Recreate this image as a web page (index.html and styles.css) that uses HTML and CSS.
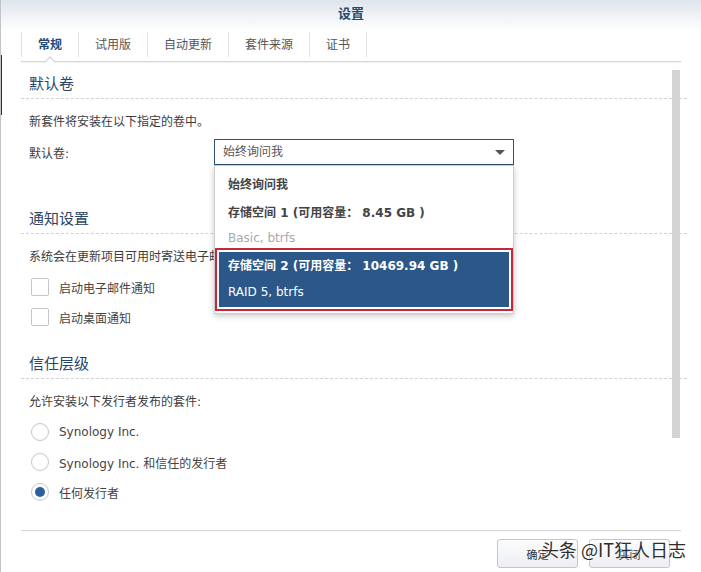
FILE: index.html
```html
<!DOCTYPE html>
<html lang="zh-CN">

<head>
    <meta charset="UTF-8">
    <title>设置</title>
    <link rel="stylesheet" href="styles.css">
</head>

<body>
    <div class="window">
        <div class="edge-mark"></div>
        <div class="titlebar">设置</div>

        <div class="tabs">
            <div class="tab active">常规</div>
            <div class="tab">试用版</div>
            <div class="tab">自动更新</div>
            <div class="tab">套件来源</div>
            <div class="tab">证书</div>
        </div>

        <div class="content">
            <!-- default volume -->
            <div class="section">
                <div class="section-title">默认卷</div>
                <p class="desc">新套件将安装在以下指定的卷中。</p>
                <div class="field-row">
                    <span class="field-label">默认卷:</span>
                    <div class="select">
                        始终询问我
                        <div class="dropdown">
                            <div class="opt bold">始终询问我</div>
                            <div class="opt bold gap">存储空间 1 (可用容量： 8.45 GB )</div>
                            <div class="opt sub">Basic, btrfs</div>
                            <div class="picked">
                                <div class="picked-inner">
                                    <div class="opt bold">存储空间 2 (可用容量： 10469.94 GB )</div>
                                    <div class="opt">RAID 5, btrfs</div>
                                </div>
                            </div>
                        </div>
                    </div>
                </div>
            </div>

            <!-- notification -->
            <div class="section notify">
                <div class="section-title">通知设置</div>
                <p class="desc">系统会在更新项目可用时寄送电子邮件通知。</p>
                <div class="check-row"><span class="checkbox"></span>启动电子邮件通知</div>
                <div class="check-row"><span class="checkbox"></span>启动桌面通知</div>
            </div>

            <!-- trust level -->
            <div class="section trust">
                <div class="section-title">信任层级</div>
                <p class="desc">允许安装以下发行者发布的套件:</p>
                <div class="check-row"><span class="radio"></span>Synology Inc.</div>
                <div class="check-row"><span class="radio"></span>Synology Inc. 和信任的发行者</div>
                <div class="check-row"><span class="radio checked"></span>任何发行者</div>
            </div>

            <div class="scrollbar"></div>
        </div>

        <div class="footer">
            <button class="btn">确定</button>
            <button class="btn">关闭</button>
        </div>

        <div class="watermark">头条 @IT狂人日志</div>
    </div>
</body>

</html>
```

FILE: styles.css
```css
/* Basic Style */
body {
    margin: 0;
    background: #fff;
    color: #3d3d3d;
    font-family: "DejaVu Sans", "Noto Sans CJK SC", sans-serif;
    font-size: 12px;
}

.window {
    position: relative;
    width: 701px;
    height: 572px;
    box-sizing: border-box;
    border-left: 1px solid #c2c4c7;
    overflow: hidden;
}

.edge-mark {
    position: absolute;
    left: -1px;
    top: 55px;
    width: 2px;
    height: 60px;
    background: #1c3450;
}

/* Title */
.titlebar {
    height: 31px;
    line-height: 28px;
    text-align: center;
    font-size: 13px;
    font-weight: 700;
    color: #294a70;
    background: linear-gradient(#dfe5ed, #ffffff);
}

/* Tabs */
.tabs {
    display: flex;
    height: 30px;
    margin: 0 20px;
    border-bottom: 1px solid #d6d6d6;
    box-shadow: 0 1px 1px rgba(0, 0, 0, 0.05);
}

.tab {
    position: relative;
    height: 24px;
    margin-top: 1px;
    padding: 1px 16px 0;
    line-height: 24px;
    color: #555;
    border-right: 1px solid #e2e2e2;
}

.tab:first-child {
    border-left: 1px solid #e2e2e2;
}

.tab.active {
    font-weight: 700;
    color: #1f4a7a;
}

.tab.active::after {
    content: "";
    position: absolute;
    left: calc(50% - 4px);
    top: 26px;
    width: 7px;
    height: 7px;
    background: #fff;
    border-top: 1px solid #d0d0d0;
    border-left: 1px solid #d0d0d0;
    transform: rotate(45deg);
}

/* Content */
.content {
    position: relative;
    height: 468px;
    margin-left: 20px;
    width: 666px;
    padding-top: 7px;
    box-sizing: border-box;
}

.section-title {
    height: 29px;
    padding-top: 1px;
    box-sizing: border-box;
    line-height: 28px;
    padding-left: 8px;
    font-size: 15px;
    color: #2a4566;
    border-bottom: 1px dashed #d2d2d2;
    box-sizing: content-box;
    height: 28px;
}

.desc {
    height: 20px;
    margin: 13px 0 0;
    padding-left: 8px;
    line-height: 20px;
}

.field-row {
    display: flex;
    align-items: center;
    margin-top: 7px;
    padding-left: 8px;
}

.field-label {
    width: 185px;
}

.select {
    position: relative;
    width: 300px;
    height: 26px;
    box-sizing: border-box;
    padding-left: 8px;
    line-height: 24px;
    color: #555;
    border: 1px solid #2f5072;
}

.select::after {
    content: "";
    position: absolute;
    right: 8px;
    top: 10px;
    border-left: 5px solid transparent;
    border-right: 5px solid transparent;
    border-top: 5px solid #555;
}

/* Dropdown list */
.dropdown {
    position: absolute;
    z-index: 5;
    left: -1px;
    top: 25px;
    width: 300px;
    box-sizing: border-box;
    padding: 5px 0 2px;
    background: #fff;
    border: 1px solid #cdcdcd;
    box-shadow: 0 2px 6px rgba(0, 0, 0, 0.22);
}

.opt {
    height: 23px;
    padding: 3px 0 0 13px;
    line-height: 23px;
    color: #444;
}

.opt.bold {
    font-weight: 700;
}

.opt.gap {
    margin-top: 2px;
}

.opt.sub {
    height: 21px;
    line-height: 21px;
    color: #a9a9a9;
}

.picked {
    margin-top: -1px;
    padding: 2px;
    border: 2px solid #c4283a;
}

.picked-inner {
    padding-bottom: 3px;
    background: #2b5789;
}

.picked-inner .opt {
    padding-left: 9px;
    color: #fff;
}

/* Notification + trust */
.notify {
    margin-top: 39px;
}

.trust {
    margin-top: 17px;
}

.check-row {
    display: flex;
    align-items: center;
    height: 30px;
    padding-left: 10px;
    color: #444;
}

.desc + .check-row {
    margin-top: 5px;
}

.checkbox,
.radio {
    width: 18px;
    height: 18px;
    margin-right: 10px;
    box-sizing: border-box;
    border: 1px solid #c6c6c6;
    border-radius: 2px;
    background: #fff;
}

.radio {
    position: relative;
    border-radius: 50%;
}

.radio.checked::after {
    content: "";
    position: absolute;
    left: 3px;
    top: 3px;
    width: 10px;
    height: 10px;
    border-radius: 50%;
    background: #2b5f9e;
}

.scrollbar {
    position: absolute;
    left: 651px;
    top: 8px;
    width: 8px;
    height: 368px;
    background: #d3d4d6;
}

/* Footer */
.footer {
    display: flex;
    justify-content: flex-end;
    gap: 11px;
    margin: 0 20px;
    padding: 8px 11px 0 0;
    border-top: 1px solid #d9d9d9;
    box-shadow: inset 0 1px 1px rgba(0, 0, 0, 0.03);
}

.btn {
    width: 81px;
    height: 29px;
    border: 1px solid #c3c7cc;
    border-radius: 3px;
    background: linear-gradient(#fdfdfe, #eceef1);
    color: #333;
    font-family: "DejaVu Sans", "Noto Sans CJK SC", sans-serif;
    font-size: 11px;
}

.watermark {
    position: absolute;
    right: 15px;
    top: 536px;
    font-family: "Noto Sans CJK SC", sans-serif;
    font-size: 18px;
    line-height: 26px;
    color: #2e2e2e;
    text-shadow: 0 0 2px #fff, 0 0 2px #fff;
}
```
